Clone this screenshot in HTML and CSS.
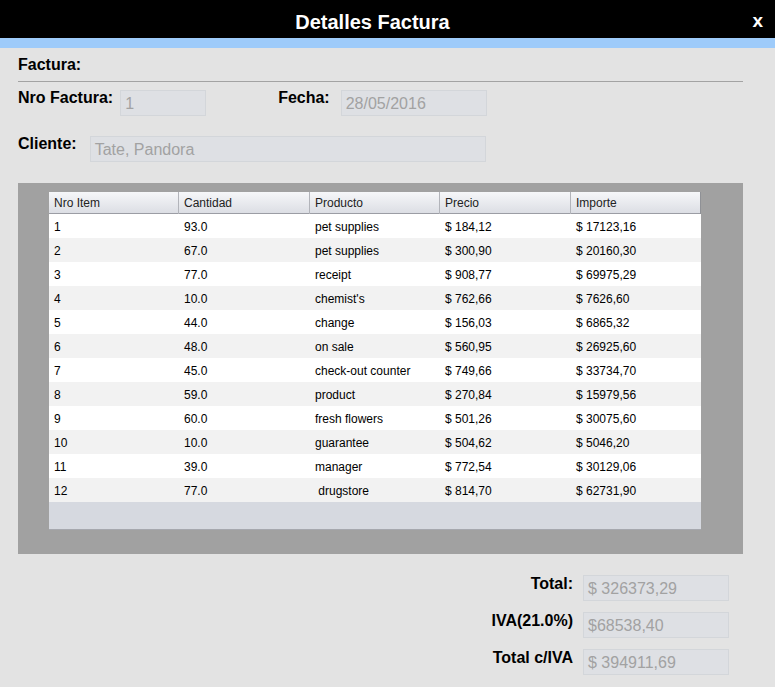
FILE: index.html
```html
<!DOCTYPE html>
<html lang="es">
<head>
<meta charset="utf-8">
<title>Detalles Factura</title>
<link rel="stylesheet" href="styles.css">
</head>
<body>
<div class="window">
  <header class="titlebar">
    <span></span>
    <h1 class="title">Detalles Factura</h1>
    <span class="close">x</span>
  </header>
  <div class="strip"></div>
  <main class="content">
    <div class="section-title">Factura:</div>
    <div class="rule"></div>
    <div class="row row-top">
      <label class="lbl">Nro Factura:</label>
      <div class="field f-nro">1</div>
      <label class="lbl lbl-fecha">Fecha:</label>
      <div class="field f-fecha">28/05/2016</div>
    </div>
    <div class="row row-cliente">
      <label class="lbl">Cliente:</label>
      <div class="field f-cliente">Tate, Pandora</div>
    </div>
    <div class="panel">
      <div class="table">
        <div class="thead">
          <div class="th">Nro Item</div>
          <div class="th">Cantidad</div>
          <div class="th">Producto</div>
          <div class="th">Precio</div>
          <div class="th">Importe</div>
        </div>
        <div class="tbody">
          <div class="tr"><div class="td">1</div><div class="td">93.0</div><div class="td">pet supplies</div><div class="td">$ 184,12</div><div class="td">$ 17123,16</div></div>
          <div class="tr"><div class="td">2</div><div class="td">67.0</div><div class="td">pet supplies</div><div class="td">$ 300,90</div><div class="td">$ 20160,30</div></div>
          <div class="tr"><div class="td">3</div><div class="td">77.0</div><div class="td">receipt</div><div class="td">$ 908,77</div><div class="td">$ 69975,29</div></div>
          <div class="tr"><div class="td">4</div><div class="td">10.0</div><div class="td">chemist's</div><div class="td">$ 762,66</div><div class="td">$ 7626,60</div></div>
          <div class="tr"><div class="td">5</div><div class="td">44.0</div><div class="td">change</div><div class="td">$ 156,03</div><div class="td">$ 6865,32</div></div>
          <div class="tr"><div class="td">6</div><div class="td">48.0</div><div class="td">on sale</div><div class="td">$ 560,95</div><div class="td">$ 26925,60</div></div>
          <div class="tr"><div class="td">7</div><div class="td">45.0</div><div class="td">check-out counter</div><div class="td">$ 749,66</div><div class="td">$ 33734,70</div></div>
          <div class="tr"><div class="td">8</div><div class="td">59.0</div><div class="td">product</div><div class="td">$ 270,84</div><div class="td">$ 15979,56</div></div>
          <div class="tr"><div class="td">9</div><div class="td">60.0</div><div class="td">fresh flowers</div><div class="td">$ 501,26</div><div class="td">$ 30075,60</div></div>
          <div class="tr"><div class="td">10</div><div class="td">10.0</div><div class="td">guarantee</div><div class="td">$ 504,62</div><div class="td">$ 5046,20</div></div>
          <div class="tr"><div class="td">11</div><div class="td">39.0</div><div class="td">manager</div><div class="td">$ 772,54</div><div class="td">$ 30129,06</div></div>
          <div class="tr"><div class="td">12</div><div class="td">77.0</div><div class="td pre"> drugstore</div><div class="td">$ 814,70</div><div class="td">$ 62731,90</div></div>
        </div>
        <div class="filler"></div>
      </div>
    </div>
    <div class="totals">
      <label class="lbl tl">Total:</label>
      <div class="field f-total">$ 326373,29</div>
      <label class="lbl tl">IVA(21.0%)</label>
      <div class="field f-total">$68538,40</div>
      <label class="lbl tl">Total c/IVA</label>
      <div class="field f-total">$ 394911,69</div>
    </div>
  </main>
</div>
</body>
</html>
```

FILE: styles.css
```css
* { box-sizing: border-box; }
html, body {
  margin: 0;
  padding: 0;
}
body {
  width: 775px;
  height: 687px;
  overflow: hidden;
  background: #e3e3e3;
  font-family: "Liberation Sans", Arial, sans-serif;
  color: #000;
}
.window {
  display: flex;
  flex-direction: column;
}
.titlebar {
  height: 38px;
  background: #000;
  color: #fff;
  display: grid;
  grid-template-columns: 1fr auto 1fr;
  align-items: center;
  padding-top: 5px;
}
.title {
  margin: 0 30px 0 0;
  font-size: 20px;
  font-weight: bold;
  line-height: 22px;
}
.close {
  justify-self: end;
  padding-right: 12px;
  font-size: 19px;
  font-weight: bold;
  line-height: 22px;
  margin-top: -2px;
}
.strip {
  height: 10px;
  background: #9ecbfa;
}
.content {
  display: flex;
  flex-direction: column;
  padding: 7px 32px 0 18px;
}
.section-title {
  font-size: 16px;
  font-weight: bold;
  line-height: 18px;
  padding-top: 1px;
}
.rule {
  height: 1px;
  background: #a3a3a3;
  margin-top: 7px;
  width: 725px;
}
.row {
  display: flex;
  align-items: flex-start;
}
.row-top { margin-top: 8px; }
.row-cliente { margin-top: 20px; }
.lbl {
  font-size: 16px;
  font-weight: bold;
  line-height: 18px;
  margin-top: -1px;
}
.field {
  height: 26px;
  background: #dee0e4;
  border: 1px solid #d3d6da;
  color: #a2a2a2;
  font-size: 16px;
  line-height: 24px;
  padding: 1px 0 0 4px;
  white-space: nowrap;
}
.f-nro { width: 86px; margin-left: 7px; }
.lbl-fecha { margin-left: 72px; }
.f-fecha { width: 146px; margin-left: 11px; }
.f-cliente { width: 396px; margin-left: 13px; }

.panel {
  margin-top: 21px;
  width: 725px;
  height: 371px;
  background: #a1a1a1;
  padding: 9px 42px 24px 31px;
}
.table {
  width: 652px;
  height: 338px;
  display: flex;
  flex-direction: column;
  background: #d6d9e0;
  border-bottom: 1px solid #a6a8ae;
  font-size: 12px;
  color: #000;
}
.thead {
  display: grid;
  grid-template-columns: 130px 131px 130px 131px 130px;
  height: 22px;
  background: linear-gradient(#f6f7f9, #dcdee4);
  border-bottom: 1px solid #9b9da4;
}
.th {
  line-height: 21px;
  padding: 1px 0 0 5px;
  color: #222;
  border-right: 1px solid #b2b4ba;
}
.th:last-child { border-right: 1px solid #8f9196; }
.tbody {
  display: flex;
  flex-direction: column;
}
.tr {
  display: grid;
  grid-template-columns: 130px 131px 130px 131px 130px;
  height: 24px;
  background: #fff;
}
.tr:nth-child(even) { background: #f2f2f2; }
.td {
  height: 24px;
  line-height: 24px;
  padding: 1px 0 0 5px;
  white-space: nowrap;
  overflow: visible;
}
.pre { white-space: pre; }
.filler { flex: 1; }

.totals {
  margin-top: 21px;
  align-self: flex-end;
  margin-right: 14px;
  display: grid;
  grid-template-columns: auto 146px;
  column-gap: 10px;
  row-gap: 11px;
  align-items: start;
}
.tl {
  text-align: right;
  margin-top: 0;
}
.f-total { width: 146px; }
```
